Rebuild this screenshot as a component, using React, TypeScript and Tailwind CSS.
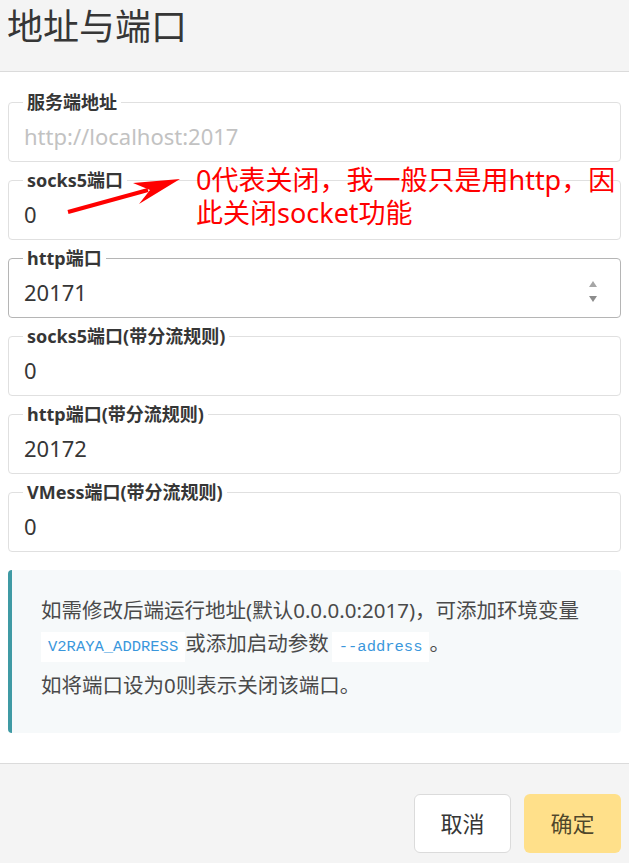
import React from "react";

const font = "font-['Noto_Sans','Noto_Sans_CJK_SC',sans-serif]";

type Field = { label: string; value?: string; placeholder?: string; focused?: boolean };

const fields: Field[] = [
  { label: "服务端地址", placeholder: "http://localhost:2017" },
  { label: "socks5端口", value: "0" },
  { label: "http端口", value: "20171", focused: true },
  { label: "socks5端口(带分流规则)", value: "0" },
  { label: "http端口(带分流规则)", value: "20172" },
  { label: "VMess端口(带分流规则)", value: "0" },
];

const Spinner = () => (
  <div className="flex flex-col items-center gap-[9px] pr-[9px]">
    <svg width="8" height="6" viewBox="0 0 8 6">
      <polygon points="4,0 8,6 0,6" fill="#a6a6a6" />
    </svg>
    <svg width="8" height="6" viewBox="0 0 8 6">
      <polygon points="0,0 8,0 4,6" fill="#8c8c8c" />
    </svg>
  </div>
);

const FieldBox = ({ f }: { f: Field }) => (
  <fieldset
    className={`rounded-[4px] border px-[14px] ${f.focused ? "border-[#b5b5b5]" : "border-[#e0e0e0]"}`}
  >
    <legend className="px-[4px] text-[18px] leading-[20px] font-bold text-[#363636]">{f.label}</legend>
    <div className="flex h-[49px] items-center pb-[2px]">
      <input
        readOnly
        value={f.value ?? ""}
        placeholder={f.placeholder}
        className="h-full flex-1 pl-px text-[22px] text-[#363636] outline-none placeholder:text-[#c2c2c2]"
      />
      {f.focused && <Spinner />}
    </div>
  </fieldset>
);

export default function App() {
  return (
    <div className={`relative w-[629px] min-h-[864px] bg-white ${font}`}>
      <header className="h-[72px] border-b border-[#dbdbdb] bg-[#f4f4f4] px-[7px] pt-[3px]">
        <h1 className="text-[36px] leading-[48px] text-[#363636]">地址与端口</h1>
      </header>

      <main className="flex flex-col gap-2 px-[8px] pt-[20px] pb-[30px]">
        {fields.map((f) => (
          <FieldBox key={f.label} f={f} />
        ))}

        <div className="mt-[10px] rounded-[4px] border-l-4 border-[#3f9aa4] bg-[#f6f9fa] pt-[24px] pb-[31px] pl-[29px] pr-4 text-[20.5px] text-[#4a4a4a]">
          <p className="leading-[33px]">
            如需修改后端运行地址(默认0.0.0.0:2017)，可添加环境变量
            <br />
            <code className="bg-white px-[7px] py-[6px] font-['Liberation_Mono',monospace] text-[15.5px] leading-none text-[#3a97dc]">
              V2RAYA_ADDRESS
            </code>
            或添加启动参数
            <code className="ml-[3px] bg-white px-[7px] py-[6px] font-['Liberation_Mono',monospace] text-[15.5px] leading-none text-[#3a97dc]">
              --address
            </code>
            。
          </p>
          <p className="mt-[9px] leading-[33px]">如将端口设为0则表示关闭该端口。</p>
        </div>
      </main>

      <footer className="flex h-[100px] justify-end gap-[13px] border-t border-[#dbdbdb] bg-[#f4f4f4] px-[8px] pt-[30px]">
        <button className="h-[59px] w-[97px] rounded-[6px] border border-[#dbdbdb] bg-white text-[22px] text-[#363636]">
          取消
        </button>
        <button className="h-[59px] w-[97px] rounded-[6px] bg-[#ffe08a] text-[22px] text-black/70">确定</button>
      </footer>

      {/* red annotation drawn over the form */}
      <svg className="absolute left-0 top-0" width="629" height="260" viewBox="0 0 629 260">
        <line x1="68" y1="212" x2="148" y2="190" stroke="#ff0000" strokeWidth="4" />
        <polygon points="180,179 133,183 150,190 139,204" fill="#ff0000" />
      </svg>
      <div className="absolute left-[196px] top-[163px] text-[27px] leading-[33px] text-[#ff0000]">
        0代表关闭，我一般只是用http，因
        <br />
        此关闭socket功能
      </div>
    </div>
  );
}
